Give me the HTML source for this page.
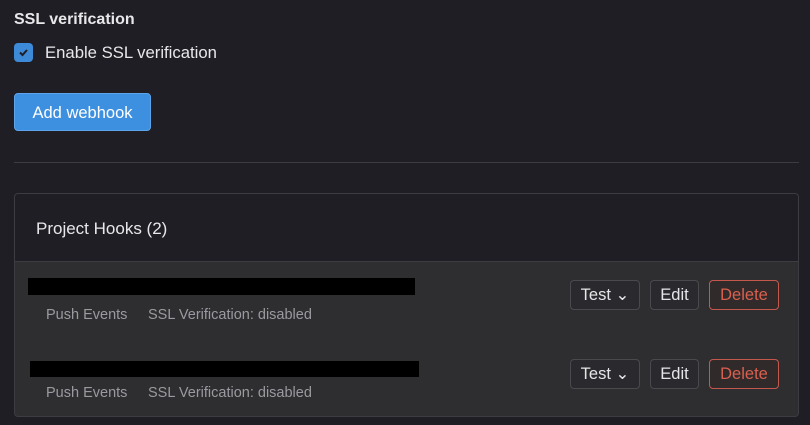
<!DOCTYPE html><html><head><style>
body{margin:0;width:810px;height:425px;background:#1f1e24;font-family:"Liberation Sans",sans-serif;color:#e8e8ea;position:relative;overflow:hidden}
.a{position:absolute}
.btn{position:absolute;box-sizing:border-box;border:1px solid #4a4a4e;border-radius:4px;background:#2a2a2e;color:#e6e6e8;font-size:16.5px;line-height:29px;text-align:center}
.del{border-color:#c4584c;color:#d9604f;background:#302a2a}
.meta{position:absolute;font-size:14.5px;color:#9a9aa0}
</style></head><body>
<div class="a" style="left:14px;top:11px;font-weight:bold;font-size:16px">SSL verification</div>
<div class="a" style="left:14px;top:43px;width:19px;height:19px;background:#3d8ad8;border-radius:4px"><svg width="19" height="19"><path d="M6 9.5l2.5 2.5 4.5-5" stroke="#1f1e24" stroke-width="2" fill="none"/></svg></div>
<div class="a" style="left:45px;top:43px;font-size:16.7px">Enable SSL verification</div>
<div class="a" style="left:14px;top:93px;width:137px;height:38px;background:#3d8fe0;border:1px solid #5ea4ea;box-sizing:border-box;border-radius:4px;color:#fff;font-size:16.5px;line-height:38px;text-align:center">Add webhook</div>
<div class="a" style="left:14px;top:162px;width:785px;height:1px;background:#3c3c42"></div>
<div class="a" style="left:14px;top:193px;width:785px;height:224px;box-sizing:border-box;border:1px solid #3c3c42;border-radius:4px;background:#2e2e30;overflow:hidden">
<div class="a" style="left:0;top:0;width:785px;height:67px;background:#1f1e24;border-bottom:1px solid #3c3c42"></div>
</div>
<div class="a" style="left:36px;top:219px;font-size:17px">Project Hooks (2)</div>
<div class="a" style="left:28px;top:278px;width:387px;height:17px;background:#000"></div>
<div class="meta" style="left:46px;top:307px">Push Events</div>
<div class="meta" style="left:148px;top:307px">SSL Verification: disabled</div>
<div class="a" style="left:30px;top:361px;width:389px;height:16px;background:#000"></div>
<div class="meta" style="left:46px;top:385px">Push Events</div>
<div class="meta" style="left:148px;top:385px">SSL Verification: disabled</div>
<div class="btn" style="left:570px;top:280px;width:70px;height:30px">Test ⌄</div>
<div class="btn" style="left:650px;top:280px;width:49px;height:30px">Edit</div>
<div class="btn del" style="left:709px;top:280px;width:70px;height:30px">Delete</div>
<div class="btn" style="left:570px;top:359px;width:70px;height:30px">Test ⌄</div>
<div class="btn" style="left:650px;top:359px;width:49px;height:30px">Edit</div>
<div class="btn del" style="left:709px;top:359px;width:70px;height:30px">Delete</div>
</body></html>
